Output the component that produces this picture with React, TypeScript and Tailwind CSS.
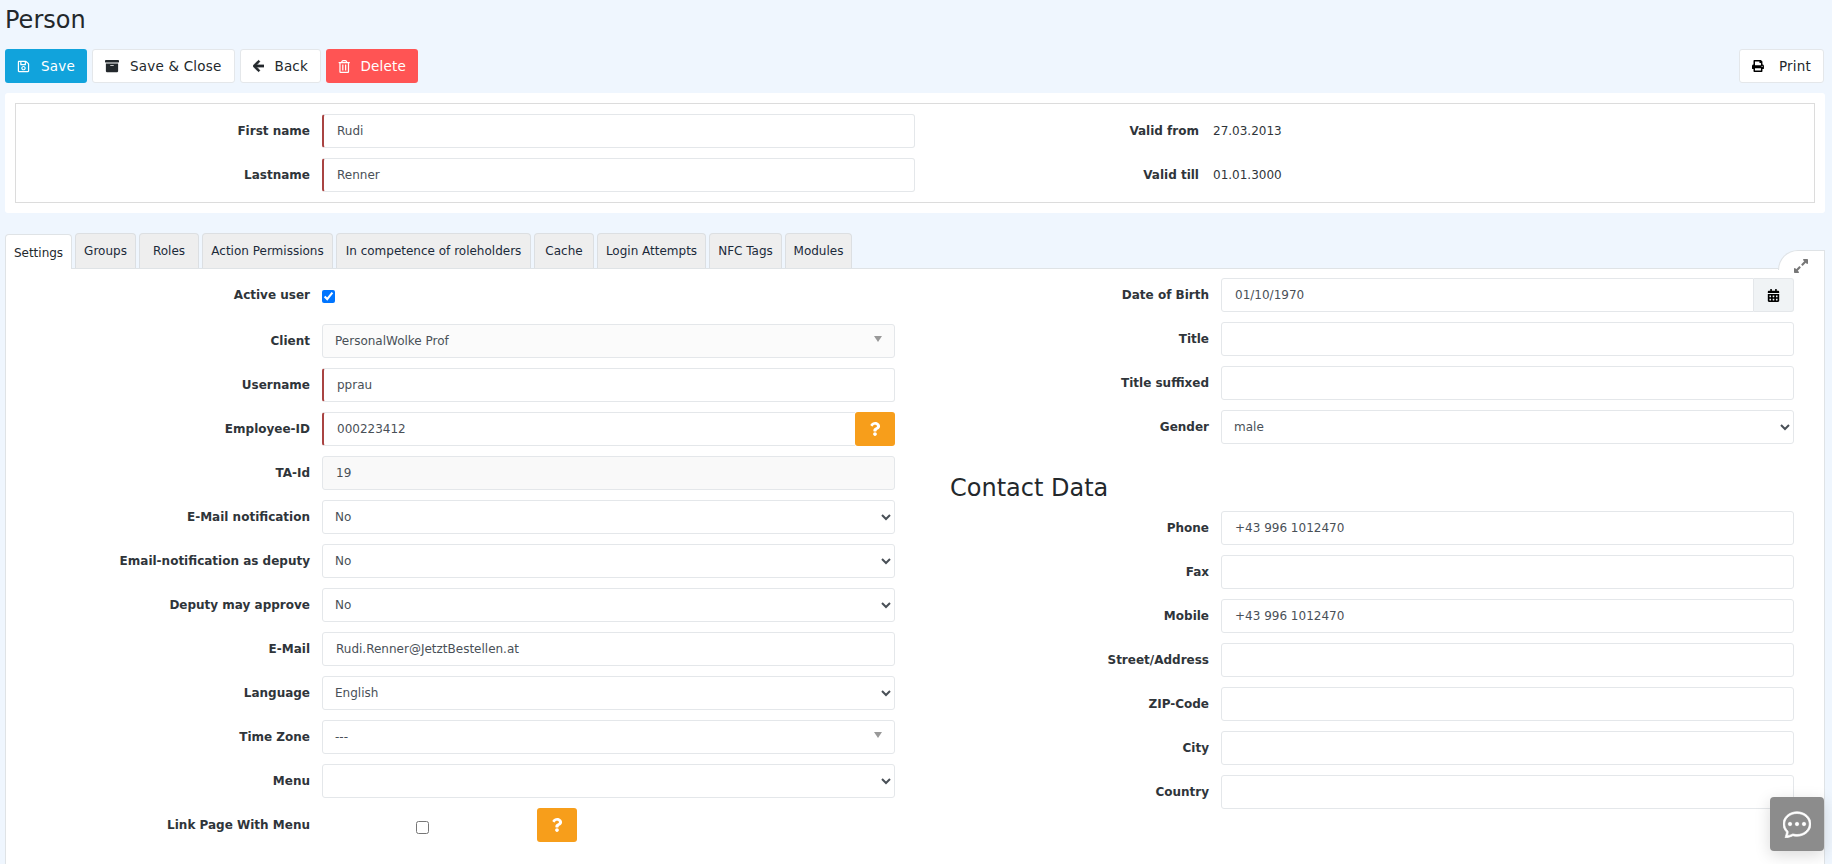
import React from "react";
import { FaRegSave, FaArchive, FaArrowLeft, FaRegTrashAlt, FaPrint, FaQuestion, FaCalendarAlt, FaExpandAlt } from "react-icons/fa";
import { BsChatDots } from "react-icons/bs";

const base = "h-[34px] w-full rounded-[3px] border border-[#e4e7ea] px-[13px] text-[12px] text-[#495057] outline-none";
const req = "border-l-2 border-l-[#a94442]";

function Label({ children, w, cls = "" }: { children: React.ReactNode; w: string; cls?: string }) {
  return <label className={`${w} shrink-0 text-right text-[12px] font-bold text-[#2f353a] ${cls}`}>{children}</label>;
}

function Help() {
  return (
    <button className="flex h-[34px] w-[40px] shrink-0 items-center justify-center rounded-[3px] bg-[#f79e1b] text-white">
      <FaQuestion className="text-[14px]" />
    </button>
  );
}

function Text({ value = "", required = false, disabled = false }: { value?: string; required?: boolean; disabled?: boolean }) {
  return <input readOnly value={value} className={`${base} ${required ? req : ""} ${disabled ? "bg-[#f9f9f9] text-[#73818f]" : "bg-white"}`} />;
}

function Sel({ value }: { value: string }) {
  return (
    <select defaultValue={value} className={`${base} bg-white pl-2`}>
      <option value={value}>{value}</option>
    </select>
  );
}

function Combo({ value, disabled = false }: { value: string; disabled?: boolean }) {
  return (
    <div className={`${base} flex items-center justify-between pl-3 pr-3 ${disabled ? "bg-[#fbfbfb] text-[#6b7785]" : "bg-white text-[#23282c]"}`}>
      <span>{value}</span>
      <span className="mb-1 h-0 w-0 border-x-[4px] border-t-[6px] border-x-transparent border-t-[#999999]" />
    </div>
  );
}

function LRow({ label, children, labelCls = "" }: { label: string; children: React.ReactNode; labelCls?: string }) {
  return (
    <div className="flex h-[34px] items-center gap-3">
      <Label w="w-[304px]" cls={labelCls}>{label}</Label>
      <div className="flex w-[573px] items-center">{children}</div>
    </div>
  );
}

function RRow({ label, children }: { label: string; children: React.ReactNode }) {
  return (
    <div className="flex h-[34px] items-center gap-3">
      <Label w="w-[254px]">{label}</Label>
      <div className="flex w-[573px] items-center">{children}</div>
    </div>
  );
}

function Btn({ icon, label, cls }: { icon: React.ReactNode; label: string; cls: string }) {
  return (
    <button className={`flex h-[34px] items-center rounded-[3px] px-3 text-[13.5px] tracking-[0.2px] ${cls}`}>
      {icon}
      <span>{label}</span>
    </button>
  );
}

const tabs: [string, string][] = [
  ["Groups", "w-[61px]"],
  ["Roles", "w-[60px]"],
  ["Action Permissions", "w-[131px]"],
  ["In competence of roleholders", "w-[195px]"],
  ["Cache", "w-[60px]"],
  ["Login Attempts", "w-[109px]"],
  ["NFC Tags", "w-[73px]"],
  ["Modules", "w-[67px]"],
];

export default function App() {
  const white = "bg-white border border-[#e4e7ea] text-[#23282c]";
  return (
    <div className="h-[864px] overflow-hidden bg-[#eff6fe] px-[5px] text-[12px] text-[#23282c]" style={{ fontFamily: '"DejaVu Sans", sans-serif' }}>
      <h1 className="h-[49px] pt-[3px] text-[24px] leading-[34px] text-[#23282c]">Person</h1>

      <div className="flex items-center gap-[5px]">
        <Btn cls="bg-[#11a3dc] text-white w-[82px]" icon={<FaRegSave className="mr-[11px] text-[13px]" />} label="Save" />
        <Btn cls={`${white} w-[143px]`} icon={<FaArchive className="mr-[11px] text-[14px]" />} label="Save & Close" />
        <Btn cls={`${white} w-[81px]`} icon={<FaArrowLeft className="mr-[10px] text-[14px]" stroke="currentColor" strokeWidth={30} />} label="Back" />
        <Btn cls="bg-[#ff5454] text-white w-[92px]" icon={<FaRegTrashAlt className="mr-[10px] text-[13px]" />} label="Delete" />
        <div className="flex-1" />
        <Btn cls={`${white} w-[85px] mr-[3px]`} icon={<FaPrint className="mr-[15px] text-[14px] text-black" />} label="Print" />
      </div>

      <section className="mt-[10px] h-[120px] w-[1820px] rounded-[3px] bg-white p-[10px]">
        <div className="flex h-[100px] border border-[#dcdcdc] pt-[10px]">
          <div className="flex flex-col gap-[10px]">
            <div className="flex h-[34px] items-center gap-3">
              <Label w="w-[294px]">First name</Label>
              <div className="w-[593px]"><Text value="Rudi" required /></div>
            </div>
            <div className="flex h-[34px] items-center gap-3">
              <Label w="w-[294px]">Lastname</Label>
              <div className="w-[593px]"><Text value="Renner" required /></div>
            </div>
          </div>
          <div className="flex flex-col gap-[10px]">
            <div className="flex h-[34px] items-center gap-[14px]">
              <Label w="w-[284px]">Valid from</Label>
              <span className="text-[#2f353a]">27.03.2013</span>
            </div>
            <div className="flex h-[34px] items-center gap-[14px]">
              <Label w="w-[284px]">Valid till</Label>
              <span className="text-[#2f353a]">01.01.3000</span>
            </div>
          </div>
        </div>
      </section>

      <div className="mt-[20px] flex h-[35px] items-end gap-[3px]">
        <div className="z-10 -mb-px flex h-[35px] w-[67px] items-center justify-center rounded-t-[4px] border border-b-0 border-[#dfe3e6] bg-white pt-[2px] text-[#23282c]">Settings</div>
        {tabs.map(([t, w]) => (
          <div key={t} className={`${w} flex h-[35px] items-center justify-center rounded-t-[4px] border border-b-0 border-[#dcdfe2] bg-[#eeeeee] text-[#1b2a3a]`}>{t}</div>
        ))}
      </div>

      <section className="relative flex h-[600px] w-[1820px] border border-[#dfe3e6] bg-white">
        <div className="absolute -top-[19px] -right-px h-[20px] w-[47px] rounded-tl-[22px] border-l border-t border-r border-[#dfe3e6] bg-white">
          <FaExpandAlt className="absolute right-[15px] top-[7px] text-[16px] text-[#777777]" />
        </div>

        <div className="flex flex-col gap-[10px] pt-[11px]">
          <LRow label="Active user" labelCls="pb-1">
            <input type="checkbox" defaultChecked className="mb-[1px] h-[13px] w-[13px] accent-[#0075ff]" />
          </LRow>
          <LRow label="Client"><Combo value="PersonalWolke Prof" disabled /></LRow>
          <LRow label="Username"><Text value="pprau" required /></LRow>
          <LRow label="Employee-ID">
            <input readOnly value="000223412" className={`${base} ${req} rounded-r-none border-r-0 bg-white`} />
            <Help />
          </LRow>
          <LRow label="TA-Id"><Text value="19" disabled /></LRow>
          <LRow label="E-Mail notification"><Sel value="No" /></LRow>
          <LRow label="Email-notification as deputy"><Sel value="No" /></LRow>
          <LRow label="Deputy may approve"><Sel value="No" /></LRow>
          <LRow label="E-Mail"><Text value="Rudi.Renner@JetztBestellen.at" /></LRow>
          <LRow label="Language"><Sel value="English" /></LRow>
          <LRow label="Time Zone"><Combo value="---" /></LRow>
          <LRow label="Menu"><Sel value="" /></LRow>
          <LRow label="Link Page With Menu">
            <div className="flex w-[215px] justify-start pl-[94px]">
              <input type="checkbox" className="mb-[-4px] h-[13px] w-[13px]" />
            </div>
            <Help />
          </LRow>
        </div>

        <div className="ml-[60px] flex flex-col gap-[10px] pt-[9px]">
          <RRow label="Date of Birth">
            <input readOnly value="01/10/1970" className={`${base} rounded-r-none bg-white`} />
            <div className="flex h-[34px] w-[40px] shrink-0 items-center justify-center rounded-r-[3px] border border-l-0 border-[#e4e7ea] bg-[#f0f3f5] text-black">
              <FaCalendarAlt className="text-[13px]" />
            </div>
          </RRow>
          <RRow label="Title"><Text /></RRow>
          <RRow label="Title suffixed"><Text /></RRow>
          <RRow label="Gender"><Sel value="male" /></RRow>
          <h2 className="mt-[18px] -ml-[5px] h-[29px] text-[24px] leading-[33px] text-[#23282c]">Contact Data</h2>
          <RRow label="Phone"><Text value="+43 996 1012470" /></RRow>
          <RRow label="Fax"><Text /></RRow>
          <RRow label="Mobile"><Text value="+43 996 1012470" /></RRow>
          <RRow label="Street/Address"><Text /></RRow>
          <RRow label="ZIP-Code"><Text /></RRow>
          <RRow label="City"><Text /></RRow>
          <RRow label="Country"><Text /></RRow>
        </div>
      </section>

      <div className="absolute left-[1770px] top-[797px] flex h-[54px] w-[54px] items-center justify-center rounded-[4px] bg-[#8c8c8c] text-white shadow-[0_4px_16px_rgba(0,0,0,0.15)]">
        <BsChatDots className="text-[28px]" stroke="currentColor" strokeWidth={0.4} />
      </div>
    </div>
  );
}
